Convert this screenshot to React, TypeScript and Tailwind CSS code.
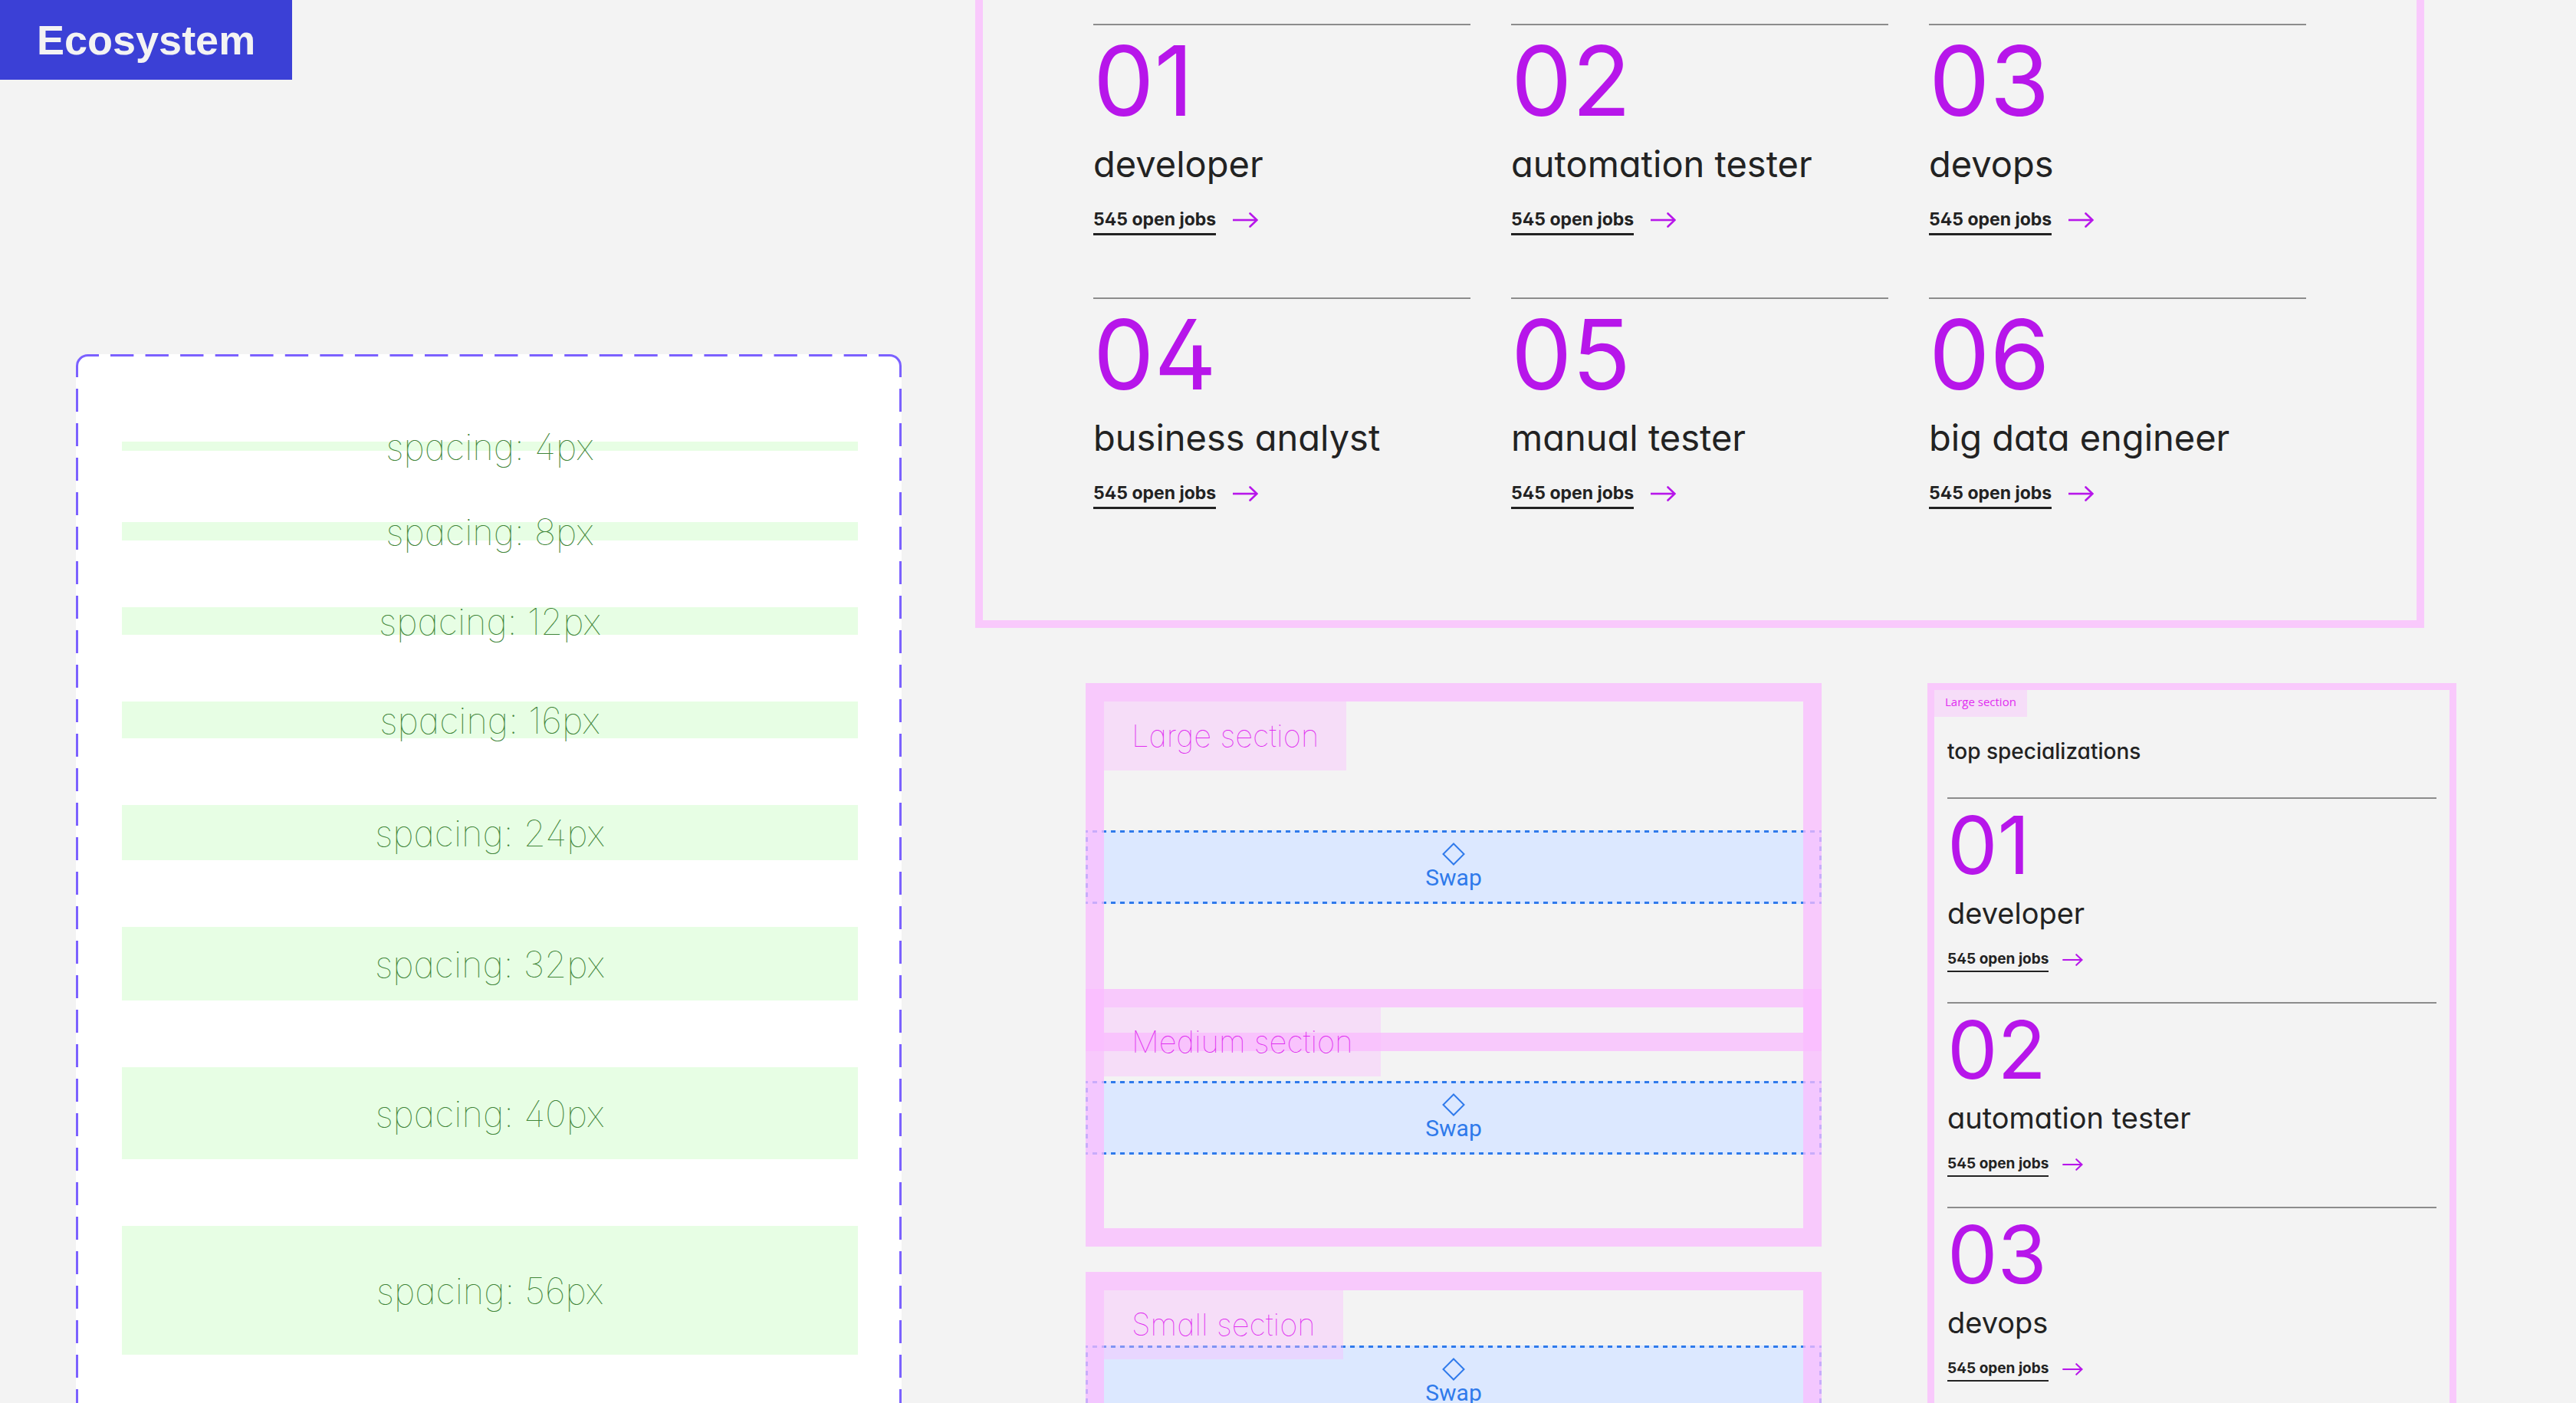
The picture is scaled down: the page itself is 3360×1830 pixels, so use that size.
import React from "react";

type Size = "lg" | "sm";

const spacings = [
  { label: "4px", bar: "h-3 mb-[6px]" },
  { label: "8px", bar: "h-6" },
  { label: "12px", bar: "h-9" },
  { label: "16px", bar: "h-12" },
  { label: "24px", bar: "h-[72px]" },
  { label: "32px", bar: "h-24" },
  { label: "40px", bar: "h-[120px]" },
  { label: "56px", bar: "h-[168px]" },
];

const jobs = [
  "developer",
  "automation tester",
  "devops",
  "business analyst",
  "manual tester",
  "big data engineer",
];

function Arrow({ size }: { size: Size }) {
  return (
    <svg
      viewBox="0 0 33 20"
      className={size === "lg" ? "h-5 w-[33px]" : "h-4 w-[27px]"}
      fill="none"
      stroke="#b716ea"
      strokeWidth="2.6"
      aria-hidden="true"
    >
      <path d="M0 10H31" />
      <path d="M22.5 1.5L31.5 10L22.5 18.5" strokeLinecap="round" />
    </svg>
  );
}

function JobCard({ index, title, size }: { index: number; title: string; size: Size }) {
  const lg = size === "lg";
  return (
    <article className="border-t-2 border-[#8c8c8c]">
      <p
        className={
          lg
            ? "pt-3 text-[126px] leading-[120px] text-[#b716ea]"
            : "pt-[11px] text-[104px] leading-[98px] text-[#b716ea]"
        }
      >
        {String(index).padStart(2, "0")}
      </p>
      <h3
        className={
          lg
            ? "mt-[23px] text-[47px] leading-[52px] whitespace-nowrap"
            : "mt-[19px] text-[38px] leading-[42px] whitespace-nowrap"
        }
      >
        {title}
      </h3>
      <div className={lg ? "mt-[31px] flex items-start gap-[22px]" : "mt-[27px] flex items-start gap-[18px]"}>
        <a
          href="#jobs"
          className={
            lg
              ? "border-b-[3px] border-[#222222] pb-[3px] text-[23px] leading-[30px] font-bold"
              : "border-b-2 border-[#222222] pb-[3px] text-[19px] leading-6 font-bold"
          }
        >
          545 open jobs
        </a>
        <span className={lg ? "flex h-8 items-center" : "flex h-[26px] items-center"}>
          <Arrow size={size} />
        </span>
      </div>
    </article>
  );
}

function DashedCorner({ className }: { className: string }) {
  return (
    <svg viewBox="0 0 30 30" className={className} fill="none" stroke="#7b61ff" strokeWidth="3" aria-hidden="true">
      <path d="M1.5 30V15.5A14 14 0 0 1 15.5 1.5H30" />
    </svg>
  );
}

function SpacingCard() {
  return (
    <section className="relative ml-[99px] mt-[358px] flex flex-1 flex-col gap-[87px] rounded-t-2xl bg-white pt-[114px] pr-[57px] pl-[60px]">
      <DashedCorner className="absolute top-0 left-0 size-[30px]" />
      <DashedCorner className="absolute top-0 right-0 size-[30px] -scale-x-100" />
      <svg className="absolute inset-x-[45px] top-0 h-[3px] w-[calc(100%-90px)]" aria-hidden="true">
        <line x1="0" y1="1.5" x2="100%" y2="1.5" pathLength={975} stroke="#7b61ff" strokeWidth="3" strokeDasharray="30 15" />
      </svg>
      <div className="absolute top-[45px] bottom-0 left-0 w-[3px] bg-[repeating-linear-gradient(#7b61ff_0_30px,transparent_30px_45px)]" />
      <div className="absolute top-[45px] right-0 bottom-0 w-[3px] bg-[repeating-linear-gradient(#7b61ff_0_30px,transparent_30px_45px)]" />
      {spacings.map((s) => (
        <div key={s.label} className={`flex shrink-0 items-center justify-center bg-[#e7fee4] ${s.bar}`}>
          <span className="text-[47px] leading-none font-thin text-[#3f8538]">spacing: {s.label}</span>
        </div>
      ))}
    </section>
  );
}

function Swap() {
  return (
    <div className="relative flex flex-col items-center bg-[#dce8ff] pt-4 pb-[18px] text-[#2f7aeb]">
      <svg className="absolute inset-0 h-full w-full" aria-hidden="true">
        <rect width="100%" height="100%" fill="none" stroke="#2f7aeb" strokeWidth="6" strokeDasharray="6 6" strokeDashoffset="3" />
      </svg>
      <svg viewBox="0 0 30 30" className="size-[30px]" fill="none" stroke="currentColor" strokeWidth="2" aria-hidden="true">
        <path d="M15 1.5L28.5 15L15 28.5L1.5 15Z" />
      </svg>
      <span className="font-[Roboto,sans-serif] text-[30px] leading-8">Swap</span>
    </div>
  );
}

function SwapSection({ label, className }: { label: string; className: string }) {
  return (
    <section className={`relative ${className}`}>
      <Swap />
      <div className="absolute inset-0 border-24 border-[#fabcff]/76" />
      <h2 className="absolute top-6 left-6 bg-[#fabcff]/40 px-9 py-5 text-[40px] leading-[50px] font-thin whitespace-nowrap text-[#e02cf0]">
        {label}
      </h2>
    </section>
  );
}

export default function App() {
  return (
    <main className="flex h-screen gap-24 overflow-hidden bg-[#f3f3f3] font-[Inter,sans-serif] text-[#222222] [font-feature-settings:'cv02','cv11']">
      <div className="flex w-[35%] shrink-0 flex-col">
        <h1 className="self-start bg-[#3b40d6] px-12 font-['Liberation_Sans',sans-serif] text-[54px] leading-[104px] font-bold text-[#f3f3f3]">
          Ecosystem
        </h1>
        <SpacingCard />
      </div>

      <div className="mr-[156px] flex min-w-0 flex-1 flex-col">
        <section className="mr-[42px] grid grid-cols-3 gap-x-[53px] gap-y-[81px] border-x-[10px] border-b-[10px] border-[#f9c9fc] px-36 pt-[31px] pb-[145px]">
          {jobs.map((title, i) => (
            <JobCard key={title} index={i + 1} title={title} size="lg" />
          ))}
        </section>

        <div className="mt-[72px] grid min-h-0 flex-1 grid-cols-[960fr_690fr] gap-[138px] pl-36">
          <div className="min-w-0">
            <SwapSection label="Large section" className="py-48" />
            <SwapSection label="Medium section" className="-mt-[81px] py-[120px]" />
            <SwapSection label="Small section" className="mt-[33px] py-24" />
          </div>

          <section className="min-w-0 border-x-[9px] border-t-[9px] border-[#f9c9fc]">
            <span className="inline-block h-[35px] bg-[#fabcff]/40 px-[14px] pt-[5px] align-top font-['Open_Sans',sans-serif] text-[15px] leading-5 text-[#e02cf0]">
              Large section
            </span>
            <div className="px-[17px] pt-[27px]">
              <h2 className="text-[28px] leading-9 font-medium">top specializations</h2>
              <div className="mt-[42px] flex flex-col gap-[39px]">
                {jobs.slice(0, 3).map((title, i) => (
                  <JobCard key={title} index={i + 1} title={title} size="sm" />
                ))}
              </div>
            </div>
          </section>
        </div>
      </div>
    </main>
  );
}
